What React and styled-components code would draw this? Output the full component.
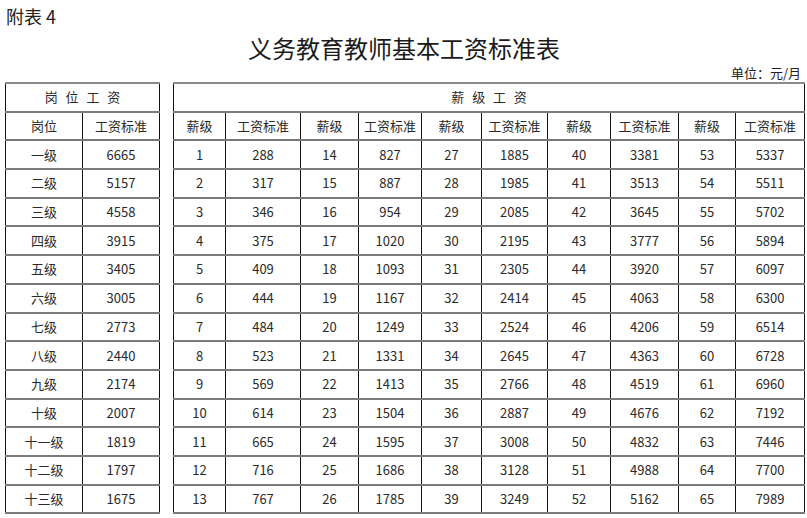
import styled, { createGlobalStyle } from 'styled-components'

const GlobalStyle = createGlobalStyle`
	html, body {
		margin: 0;
		padding: 0;
		background: #fff;
	}
	body {
		font-family: 'Noto Sans CJK SC', 'Noto Sans', sans-serif;
		color: #1e1e1e;
	}
`

const positions = [
	['一级', 6665],
	['二级', 5157],
	['三级', 4558],
	['四级', 3915],
	['五级', 3405],
	['六级', 3005],
	['七级', 2773],
	['八级', 2440],
	['九级', 2174],
	['十级', 2007],
	['十一级', 1819],
	['十二级', 1797],
	['十三级', 1675],
]

const salaries = [
	288, 317, 346, 375, 409, 444, 484, 523, 569, 614, 665, 716, 767,
	827, 887, 954, 1020, 1093, 1167, 1249, 1331, 1413, 1504, 1595, 1686, 1785,
	1885, 1985, 2085, 2195, 2305, 2414, 2524, 2645, 2766, 2887, 3008, 3128, 3249,
	3381, 3513, 3645, 3777, 3920, 4063, 4206, 4363, 4519, 4676, 4832, 4988, 5162,
	5337, 5511, 5702, 5894, 6097, 6300, 6514, 6728, 6960, 7192, 7446, 7700, 7989,
]

const rightCols = [52, 75, 58, 63, 60, 66, 63, 68, 57, 69]

export default function App() {
	return (
		<Page>
			<GlobalStyle />
			<Annex>附表 4</Annex>
			<Title>义务教育教师基本工资标准表</Title>
			<Unit>单位：元/月</Unit>
			<Tables>
				<Table $width={154}>
					<colgroup>
						<col style={{ width: 77 }} />
						<col style={{ width: 77 }} />
					</colgroup>
					<tbody>
						<tr>
							<Cell colSpan={2} $spaced>
								岗位工资
							</Cell>
						</tr>
						<tr>
							<Cell>岗位</Cell>
							<Cell>工资标准</Cell>
						</tr>
						{positions.map(([name, value]) => (
							<tr key={name}>
								<Cell>{name}</Cell>
								<Cell>{value}</Cell>
							</tr>
						))}
					</tbody>
				</Table>
				<Table $width={631}>
					<colgroup>
						{rightCols.map((w, i) => (
							<col key={i} style={{ width: w }} />
						))}
					</colgroup>
					<tbody>
						<tr>
							<Cell colSpan={10} $spaced>
								薪级工资
							</Cell>
						</tr>
						<tr>
							{[0, 1, 2, 3, 4].map((i) => [
								<Cell key={`a${i}`}>薪级</Cell>,
								<Cell key={`b${i}`}>工资标准</Cell>,
							])}
						</tr>
						{Array.from({ length: 13 }).map((_, r) => (
							<tr key={r}>
								{[0, 1, 2, 3, 4].map((c) => {
									const idx = c * 13 + r
									return [
										<Cell key={`g${c}`}>{idx + 1}</Cell>,
										<Cell key={`s${c}`}>{salaries[idx]}</Cell>,
									]
								})}
							</tr>
						))}
					</tbody>
				</Table>
			</Tables>
		</Page>
	)
}

const Page = styled.div`
	width: 807px;
	height: 518px;
	overflow: hidden;
	box-sizing: border-box;
	padding: 4px 4px 0 5px;
	display: flex;
	flex-direction: column;
`

const Annex = styled.div`
	font-size: 18px;
	line-height: 24px;
	padding-left: 1px;
	color: #222;
`

const Title = styled.h1`
	margin: 4px 0 0;
	font-size: 24px;
	font-weight: 400;
	line-height: 32px;
	text-align: center;
	color: #1a1a1a;
`

const Unit = styled.div`
	font-size: 13px;
	line-height: 18px;
	text-align: right;
	padding-right: 2px;
	color: #222;
`

const Tables = styled.div`
	display: flex;
	gap: 13px;
	align-items: flex-start;
`

const Table = styled.table`
	width: ${(p) => p.$width}px;
	table-layout: fixed;
	border-collapse: collapse;
	border-top: 2px solid #8a8a8a;
`

const Cell = styled.td`
	height: 26.7px;
	padding: 0;
	text-align: center;
	font-size: 13px;
	line-height: 18px;
	color: #2a2a2a;
	border-left: 1.5px solid #111;
	border-right: 1.5px solid #111;
	border-bottom: 2px solid #7a7a7a;
	letter-spacing: ${(p) => (p.$spaced ? '0.6em' : '0')};
	text-indent: ${(p) => (p.$spaced ? '0.6em' : '0')};
	white-space: nowrap;
`
